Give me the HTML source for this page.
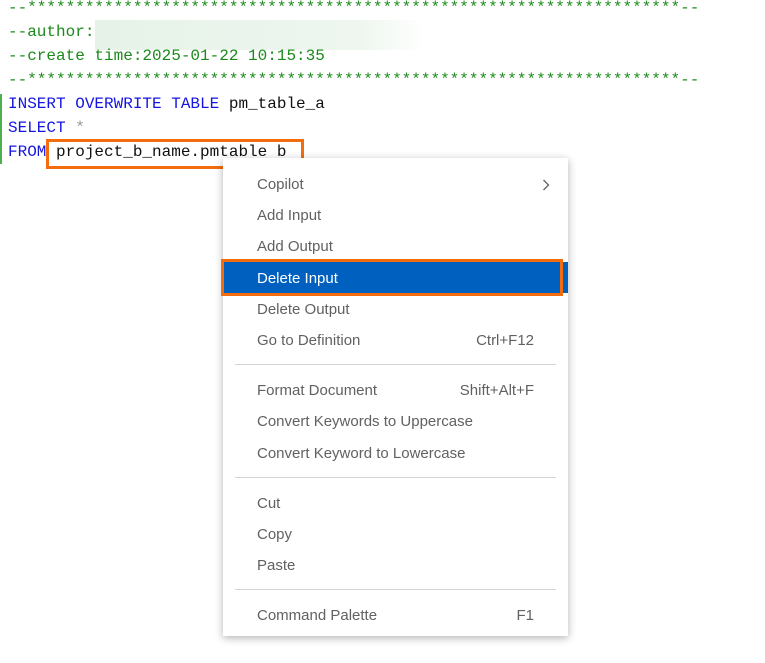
<!DOCTYPE html>
<html><head><style>
body{margin:0;width:765px;height:663px;background:#fff;position:relative;overflow:hidden;font-family:"Liberation Mono",monospace}
.l{position:absolute;left:8px;font-size:16px;line-height:24px;white-space:pre}
.g{color:#1a8a1a}.k{color:#1515e0}.t{color:#111}.s{color:#999}
#menu{position:absolute;left:223px;top:158px;width:345px;height:478px;background:#fff;box-shadow:0 2px 8px rgba(0,0,0,.3);font-family:"Liberation Sans",sans-serif;font-size:15px;color:#616161}
.i{position:absolute;left:0;right:0;height:31px;line-height:33px;padding-left:34px}
.i span{position:absolute;right:34px}
.sep{position:absolute;left:12px;right:12px;height:1px;background:#d4d4d4}
</style></head><body>
<div style="position:absolute;left:0;top:94px;width:2px;height:70px;background:#4caf50"></div>
<div class="l g" style="top:-4px">--********************************************************************--</div>
<div class="l g" style="top:20px">--author:</div>
<div style="position:absolute;left:95px;top:20px;width:330px;height:30px;background:linear-gradient(90deg,#e6f2e8,#eef6ef 80%,#fff)"></div>
<div class="l g" style="top:44px">--create time:2025-01-22 10:15:35</div>
<div class="l g" style="top:68px">--********************************************************************--</div>
<div class="l" style="top:92px"><span class="k">INSERT OVERWRITE TABLE</span><span class="t"> pm_table_a</span></div>
<div class="l" style="top:116px"><span class="k">SELECT</span> <span class="s">*</span></div>
<div class="l" style="top:140px"><span class="k">FROM</span><span class="t"> project_b_name.pmtable b</span></div>
<div style="position:absolute;left:46px;top:139px;width:252px;height:24px;border:3px solid #f36c0e"></div>
<div id="menu">
<div class="i" style="top:10px">Copilot<svg style="position:absolute;right:18px;top:11px" width="8" height="12" viewBox="0 0 8 12"><path d="M1.5 1L6.5 6L1.5 11" fill="none" stroke="#616161" stroke-width="1.3"/></svg></div>
<div class="i" style="top:41px">Add Input</div>
<div class="i" style="top:72px">Add Output</div>
<div class="i" style="top:104px;background:#0060c0;color:#fff">Delete Input</div>
<div class="i" style="top:135px">Delete Output</div>
<div class="i" style="top:166px">Go to Definition<span>Ctrl+F12</span></div>
<div class="sep" style="top:206px"></div>
<div class="i" style="top:216px">Format Document<span>Shift+Alt+F</span></div>
<div class="i" style="top:247px">Convert Keywords to Uppercase</div>
<div class="i" style="top:279px">Convert Keyword to Lowercase</div>
<div class="sep" style="top:319px"></div>
<div class="i" style="top:329px">Cut</div>
<div class="i" style="top:360px">Copy</div>
<div class="i" style="top:391px">Paste</div>
<div class="sep" style="top:431px"></div>
<div class="i" style="top:441px">Command Palette<span>F1</span></div>
</div>
<div style="position:absolute;left:221px;top:259px;width:336px;height:31px;border:3px solid #f36c0e"></div>
</body></html>
